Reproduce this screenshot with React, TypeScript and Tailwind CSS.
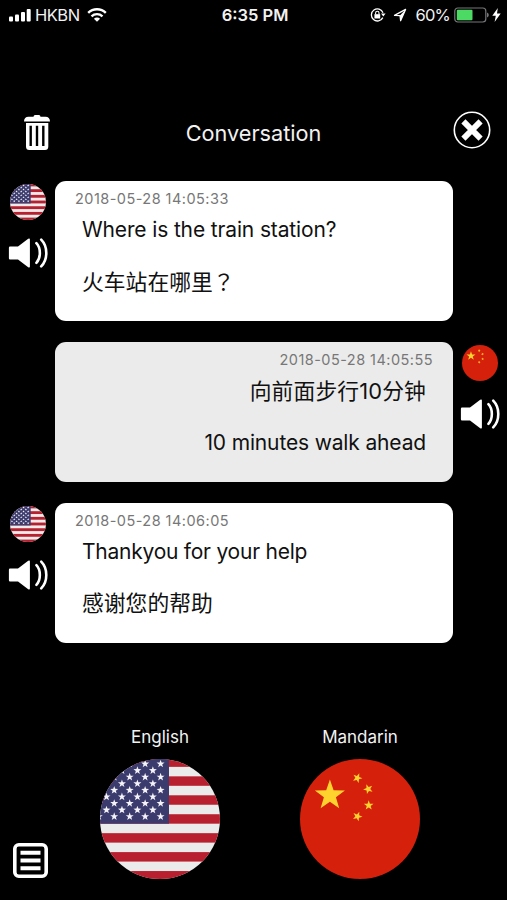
import type { ReactNode } from "react";

function starPoints(cx: number, cy: number, r: number, rotation = 0): string {
  return Array.from({ length: 10 }, (_, i) => {
    const radius = i % 2 === 0 ? r : r * 0.4;
    const angle = ((i * 36 - 90 + rotation) * Math.PI) / 180;
    return `${(cx + radius * Math.cos(angle)).toFixed(2)},${(cy + radius * Math.sin(angle)).toFixed(2)}`;
  }).join(" ");
}

function UsFlag({ id, className }: { id: string; className: string }) {
  const stars: ReactNode[] = [];
  for (let row = 0; row < 9; row++) {
    for (let col = row % 2; col < 9; col += 2) {
      stars.push(
        <polygon key={`${row}-${col}`} points={starPoints(60.6 - col * 7.73, 4.9 + row * 6.58, 4.2)} />
      );
    }
  }
  return (
    <svg viewBox="0 0 120 120" className={className}>
      <clipPath id={id}>
        <circle cx="60" cy="60" r="60" />
      </clipPath>
      <g clipPath={`url(#${id})`}>
        <rect width="120" height="120" fill="#ebebeb" />
        {[0, 1, 2, 3, 4, 5, 6].map((i) => (
          <rect key={i} y={-1.6 + i * 18.94} width="120" height="9.47" fill="#b8202f" />
        ))}
        <rect width="69" height="64.7" fill="#3c3b6e" />
        <g fill="#f4f4f8">{stars}</g>
      </g>
    </svg>
  );
}

function ChinaFlag({ className }: { className: string }) {
  return (
    <svg viewBox="0 0 120 120" className={className}>
      <circle cx="60" cy="60" r="60" fill="#d5200c" />
      <g fill="#ffd22e">
        <polygon points={starPoints(29.9, 36.4, 15.8)} />
        <polygon points={starPoints(57.4, 19, 5.1, 22)} />
        <polygon points={starPoints(68.2, 30.1, 5.1, -22)} />
        <polygon points={starPoints(68.7, 46.4, 5.1, 0)} />
        <polygon points={starPoints(57.4, 57.4, 5.1, 22)} />
      </g>
    </svg>
  );
}

function Speaker() {
  return (
    <svg viewBox="0 0 40 32" className="h-8 w-10" fill="none">
      <path
        d="M2 9.5H10L20.2 1.8Q21.9 1 21.9 2.4V29.6Q21.9 31 20.2 30.2L10 22.6H2Q.9 22.6 .9 21.3V10.8Q.9 9.5 2 9.5Z"
        fill="white"
      />
      <path d="M28.4 6.2C33 11 33 21 28.4 25.8" stroke="white" strokeWidth="2.6" strokeLinecap="round" />
      <path d="M33.2 2.6C40 9.5 40 22.5 33.2 29.4" stroke="white" strokeWidth="2.6" strokeLinecap="round" />
    </svg>
  );
}

function Trash() {
  return (
    <svg viewBox="0 0 26 35" className="h-[35px] w-[26px]">
      <path
        d="M9.5 1.8Q9.7 0 11 0H15Q16.3 0 16.5 1.8H21.5C24.3 1.8 26 3.4 26 6.6H0C0 3.4 1.7 1.8 4.5 1.8Z"
        fill="white"
      />
      <path
        fillRule="evenodd"
        d="M2 8H24.3V31.5Q24.3 35 21 35H5.3Q2 35 2 31.5ZM5.5 10.8V31H7.9V10.8ZM11.8 10.8V31H14.2V10.8ZM18.1 10.8V31H20.5V10.8Z"
        fill="white"
      />
    </svg>
  );
}

function StatusBar() {
  return (
    <header className="grid h-[30px] grid-cols-3 items-center pl-[9px] pr-1.5 text-[16.5px] leading-[30px]">
      <div className="flex items-center">
        <svg viewBox="0 0 22 14" className="h-3.5 w-[22px]" fill="white">
          <rect x="0" y="8.5" width="4" height="5" rx="1" />
          <rect x="6" y="6.5" width="4" height="7" rx="1" />
          <rect x="12" y="4" width="4" height="9.5" rx="1" />
          <rect x="17.7" y="1" width="4" height="12.5" rx="1" />
        </svg>
        <span className="ml-1 tracking-[-0.5px]">HKBN</span>
        <svg viewBox="0 0 20 14" className="ml-[7px] h-3.5 w-5" fill="none" stroke="white">
          <path d="M1.2 4.8C6 .1 14 .1 18.8 4.8" strokeWidth="2.4" />
          <path d="M4.5 8.3C7.6 5.4 12.4 5.4 15.5 8.3" strokeWidth="2.3" />
          <path d="M10 13.8L6.9 10.7C8.6 9.1 11.4 9.1 13.1 10.7Z" fill="white" stroke="none" />
        </svg>
      </div>
      <div className="text-center font-semibold">6:35 PM</div>
      <div className="flex items-center justify-end">
        <svg viewBox="0 0 16 14" className="h-3.5 w-4" fill="none" stroke="white">
          <path d="M13 4.8A6 6 0 1 0 12.8 9.6" strokeWidth="1.3" />
          <path d="M11 5.5H15.6L13.3 8.6Z" fill="white" stroke="none" />
          <rect x="4.4" y="6.2" width="5.8" height="4.3" fill="white" stroke="none" />
          <path d="M5.6 6.4V5A1.7 1.7 0 0 1 9 5V6.4" strokeWidth="1.1" />
        </svg>
        <svg viewBox="0 0 14 14" className="ml-[7px] size-3.5" fill="none" stroke="white" strokeWidth="1.2">
          <path d="M1.5 7.4L12.6 1.4L7.6 12.8L7 7.6Z" strokeLinejoin="round" />
          <path d="M12.6 1.4L7.6 12.8L7 7.6Z" fill="white" stroke="none" />
        </svg>
        <span className="ml-[9px] tracking-[-0.8px]">60%</span>
        <svg viewBox="0 0 36 16" className="ml-1 h-4 w-9">
          <rect x="0.8" y="1" width="31" height="14" rx="3" fill="none" stroke="#77777b" strokeWidth="1.2" />
          <rect x="2.8" y="2.8" width="15.7" height="10.4" rx="1" fill="#4cd964" />
          <path d="M33 5.5Q34.8 6.2 34.8 8Q34.8 9.8 33 10.5Z" fill="#77777b" />
        </svg>
        <svg viewBox="0 0 9 14" className="ml-0.5 h-3.5 w-[9px]" fill="white">
          <path d="M5.8 0L.3 7.8H3.8L2.6 14L8.7 5.6H5Z" />
        </svg>
      </div>
    </header>
  );
}

interface Message {
  time: string;
  text: string;
  translation: ReactNode;
  from: "en" | "zh";
  textClass: string;
  translationClass: string;
}

const messages: Message[] = [
  {
    time: "2018-05-28 14:05:33",
    text: "Where is the train station?",
    translation: (
      <>
        火车站在哪里<span className="font-['Noto_Sans_CJK_TC',sans-serif]" lang="zh-Hant">？</span>
      </>
    ),
    from: "en",
    textClass: "text-[21px] tracking-[-0.14px]",
    translationClass: "text-[21.8px]",
  },
  {
    time: "2018-05-28 14:05:55",
    text: "向前面步行10分钟",
    translation: "10 minutes walk ahead",
    from: "zh",
    textClass: "text-[21.8px] tracking-[0.13px]",
    translationClass: "text-[21px] tracking-[-0.15px]",
  },
  {
    time: "2018-05-28 14:06:05",
    text: "Thankyou for your help",
    translation: "感谢您的帮助",
    from: "en",
    textClass: "text-[21px] tracking-[-0.24px]",
    translationClass: "text-[21.8px]",
  },
];

function MessageRow({ message, index }: { message: Message; index: number }) {
  const mine = message.from === "en";
  const controls = (
    <div className="flex flex-col items-center gap-[17.4px] pt-[2.4px]">
      {mine ? <UsFlag id={`flag-${index}`} className="size-9" /> : <ChinaFlag className="size-9" />}
      <Speaker />
    </div>
  );
  return (
    <li className="grid h-[140px] grid-cols-[55px_398px_54px]">
      {mine ? controls : <span />}
      <article
        className={`rounded-[11px] whitespace-nowrap text-[#111] ${
          mine ? "bg-white pl-5" : "bg-[#ebebeb] pr-5 text-right"
        }`}
      >
        <time className="block pt-2 text-[14.5px] leading-5 tracking-[0.46px] text-[#777]">
          {message.time}
        </time>
        <div className={mine ? "pl-[7px]" : "pr-[7px]"}>
          <p className={`mt-[7px] leading-[28px] ${message.textClass}`}>{message.text}</p>
          <p className={`leading-[28px] ${mine ? "mt-[22.5px]" : "mt-6"} ${message.translationClass}`}>
            {message.translation}
          </p>
        </div>
      </article>
      {mine ? <span /> : controls}
    </li>
  );
}

export default function App() {
  return (
    <main className="flex h-[900px] w-[507px] flex-col overflow-hidden bg-black font-['Inter','Noto_Sans_CJK_SC',sans-serif] text-[#f2f2f2]">
      <StatusBar />
      <nav className="mt-[82px] grid h-10 grid-cols-[100px_1fr_100px] items-center">
        <button className="ml-6 justify-self-start" aria-label="Delete conversation">
          <Trash />
        </button>
        <h1 className="mt-0.5 text-center text-[21.7px] leading-[38px]">Conversation</h1>
        <button className="mr-4 -mt-1 justify-self-end" aria-label="Close">
          <svg viewBox="0 0 38 38" className="size-[38px]" fill="none" stroke="white">
            <circle cx="19" cy="19" r="17.7" strokeWidth="1.6" />
            <path d="M10.4 10.4L27.6 27.6M27.6 10.4L10.4 27.6" strokeWidth="5.8" />
          </svg>
        </button>
      </nav>
      <ul className="mt-[29.4px] flex flex-col gap-[21px]">
        {messages.map((message, i) => (
          <MessageRow key={i} message={message} index={i} />
        ))}
      </ul>
      <footer className="mt-[79px] grid grid-cols-[60px_200px_200px] text-[17px]">
        <button className="mt-[120px] ml-[13px] justify-self-start" aria-label="Menu">
          <svg viewBox="0 0 35 35" className="size-[35px]" fill="none" stroke="white">
            <rect x="1.8" y="1.8" width="31.4" height="31.4" rx="4" strokeWidth="3.6" />
            <path d="M7.5 9.8H27.5M7.5 17.5H27.5M7.5 25.2H27.5" strokeWidth="4" />
          </svg>
        </button>
        <div className="flex flex-col items-center gap-2">
          <span className="pt-px leading-7">English</span>
          <UsFlag id="flag-language" className="size-[120px]" />
        </div>
        <div className="flex flex-col items-center gap-2">
          <span className="pt-px leading-7">Mandarin</span>
          <ChinaFlag className="size-[120px]" />
        </div>
      </footer>
    </main>
  );
}
